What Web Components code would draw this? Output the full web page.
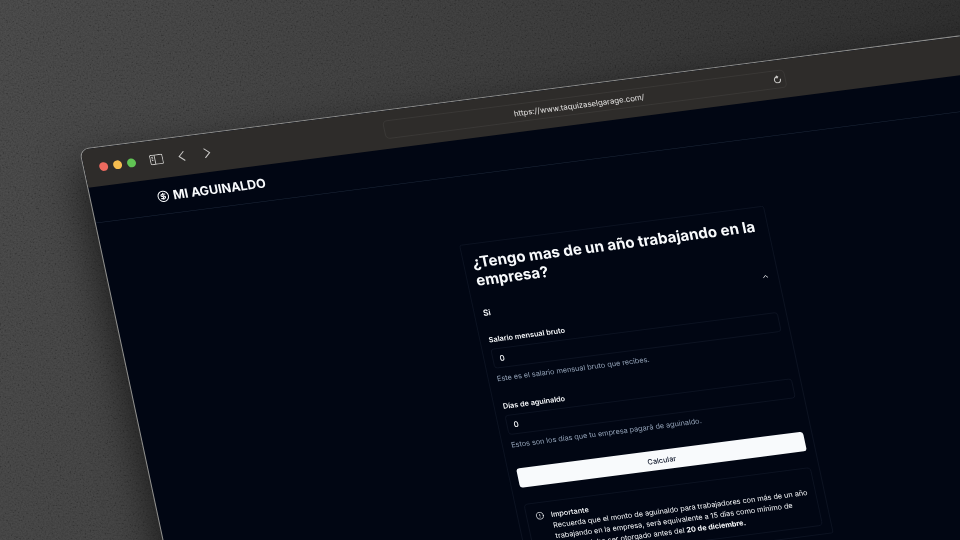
<!DOCTYPE html>
<html lang="es">
<head>
<meta charset="utf-8">
<title>Mi Aguinaldo</title>
<style>
  html, body { margin: 0; height: 100%; }
  body { overflow: hidden; background: #333; font-family: Inter, "Liberation Sans", sans-serif; }
</style>
</head>
<body>
<desk-scene>
  <browser-window url="https://www.taquizaselgarage.com/">
    <site-nav name="MI AGUINALDO"></site-nav>
    <bonus-card heading="¿Tengo mas de un año trabajando en la empresa?" answer="Si">
      <form-field label="Salario mensual bruto" hint="Este es el salario mensual bruto que recibes."></form-field>
      <form-field label="Días de aguinaldo" hint="Estos son los días que tu empresa pagará de aguinaldo."></form-field>
      <submit-button>Calcular</submit-button>
      <info-alert heading="Importante">Recuerda que el monto de aguinaldo para trabajadores con más de un año trabajando en la empresa, será equivalente a 15 días como mínimo de salario y debe ser otorgado antes del <b>20 de diciembre.</b></info-alert>
    </bonus-card>
  </browser-window>
</desk-scene>

<script>
class Base extends HTMLElement {
  connectedCallback() {
    if (this.shadowRoot) return;
    this.attachShadow({ mode: "open" }).innerHTML = this.view();
  }
}

customElements.define("desk-scene", class extends Base {
  view() { return `
    <style>
      :host { display: block; position: relative; height: 100vh; overflow: hidden; --line: #151d2d;
        background: linear-gradient(105deg, #444 0%, #393939 45%, #2b2b2b 90%); }
      .grain { position: absolute; inset: 0; width: 100%; height: 100%; opacity: .14; mix-blend-mode: overlay; }
      .stage { position: absolute; left: 79px; top: 149px; width: 203vw; transform-origin: 0 0;
        transform: rotate(-7.35deg) skewX(4.7deg) scale(.52); }
    </style>
    <svg class="grain" aria-hidden="true">
      <filter id="n"><feTurbulence type="fractalNoise" baseFrequency=".6" numOctaves="2" seed="4"/><feColorMatrix type="saturate" values="0"/><feComponentTransfer><feFuncR type="linear" slope="2.4" intercept="-.7"/><feFuncG type="linear" slope="2.4" intercept="-.7"/><feFuncB type="linear" slope="2.4" intercept="-.7"/><feFuncA type="linear" slope="0" intercept="1"/></feComponentTransfer></filter>
      <rect width="100%" height="100%" filter="url(#n)"/>
    </svg>
    <div class="stage"><slot></slot></div>`; }
});

customElements.define("browser-window", class extends Base {
  view() { return `
    <style>
      :host { display: block; box-sizing: border-box; min-height: 230vh; overflow: hidden; border: 2px solid #8e8e8c;
        border-radius: 18px; background: #010613; box-shadow: -10px 30px 80px rgba(0,0,0,.6); color: #f8fafc; }
      .bar { box-sizing: border-box; display: grid; grid-template-columns: 1fr 779px 1fr; align-items: center; height: 74px; padding-right: 4px; background: #2e2c2a; }
      .left, .dots { display: flex; align-items: center; }
      .left { padding-left: 29px; gap: 27px; }
      .dots { gap: 10px; }
      .dots i { width: 17px; height: 17px; border-radius: 50%; }
      button { all: unset; display: flex; color: #c9c8c6; }
      .addr { box-sizing: border-box; display: flex; align-items: center; height: 36px; padding-right: 6px; border: 2px solid #3a3836; border-radius: 9px; }
      input { all: unset; flex: 1; min-width: 0; text-align: center; font: 400 15px Inter, sans-serif; color: #e4e3e2; }
    </style>
    <div class="bar">
      <div class="left">
        <div class="dots"><i style="background:#ed6a5f"></i><i style="background:#f5bd4f"></i><i style="background:#61c454"></i></div>
        <button aria-label="Barra lateral"><svg width="26" height="20" viewBox="0 0 26 20" fill="none" stroke="currentColor" stroke-width="1.8"><rect x="1" y="1" width="24" height="18" rx="2"/><path d="M10 1v18M4 5h3M4 8h3M4 11h3"/></svg></button>
        <button aria-label="Atrás"><svg width="20" height="20" viewBox="0 0 20 20" fill="none" stroke="currentColor" stroke-width="2"><path d="M14 1L4 10l10 9"/></svg></button>
        <button aria-label="Adelante"><svg width="20" height="20" viewBox="0 0 20 20" fill="none" stroke="currentColor" stroke-width="2"><path d="M6 1l10 9-10 9"/></svg></button>
      </div>
      <div class="addr"><input aria-label="Dirección" value="${this.getAttribute("url")}">
        <button aria-label="Recargar"><svg width="16" height="16" viewBox="0 0 16 16" fill="none" stroke="currentColor" stroke-width="2"><path d="M13.500 7.500a5.800 5.800 0 1 1-5-4.300M6.500 .8L9.500 3.300 7 6"/></svg></button></div>
    </div>
    <slot></slot>`; }
});

customElements.define("site-nav", class extends Base {
  view() { return `
    <style>
      :host { display: flex; align-items: center; height: 69px; padding: 0 126px; border-bottom: 1px solid #1e293b; }
      a { display: flex; align-items: center; gap: 7px; color: inherit; text-decoration: none; font-size: 24px; font-weight: 700; line-height: 32px; }
    </style>
    <a href="#"><svg width="24" height="24" viewBox="0 0 24 24" fill="none" stroke="currentColor" stroke-width="2" stroke-linecap="round" stroke-linejoin="round"><circle cx="12" cy="12" r="10"/><path d="M16 8h-6a2 2 0 1 0 0 4h4a2 2 0 1 1 0 4H8M12 18V6"/></svg>${this.getAttribute("name")}</a>`; }
});

customElements.define("bonus-card", class extends Base {
  view() { return `
    <style>
      :host { box-sizing: border-box; display: block; width: 590px; margin: 131px auto 0; padding: 18px 16px 16px; border: 1px solid var(--line); border-radius: 4px; }
      h2 { margin: 0; font-size: 29px; font-weight: 700; line-height: 35px; }
      .row { all: unset; display: flex; justify-content: space-between; align-items: center; width: 100%; box-sizing: border-box; padding: 34px 0 33px; font-size: 16px; font-weight: 600; line-height: 24px; }
      form { display: flex; flex-direction: column; }
    </style>
    <h2>${this.getAttribute("heading")}</h2>
    <button class="row" aria-expanded="true">${this.getAttribute("answer")}<svg width="16" height="16" viewBox="0 0 24 24" fill="none" stroke="currentColor" stroke-width="2" stroke-linecap="round" stroke-linejoin="round"><path d="M18 15l-6-6-6 6"/></svg></button>
    <form><slot></slot></form>`; }
});

customElements.define("form-field", class extends Base {
  view() { return `
    <style>
      :host { display: grid; gap: 10px; margin-bottom: 36px; font-size: 14px; line-height: 20px; }
      label { font-weight: 600; line-height: 16px; }
      input { box-sizing: border-box; width: 100%; height: 38px; margin: 0; padding: 0 12px; border: 1px solid var(--line); border-radius: 6px; background: none; color: inherit; font: 500 15px Inter, sans-serif; outline: none; }
      p { margin: 0; color: #94a3b8; }
    </style>
    <label for="v">${this.getAttribute("label")}</label>
    <input id="v" value="0" inputmode="numeric">
    <p>${this.getAttribute("hint")}</p>`; }
});

customElements.define("submit-button", class extends Base {
  view() { return `
    <style>
      :host { display: block; }
      button { display: block; width: 100%; height: 38px; border: 0; border-radius: 6px; background: #f8fafc; color: #0f172a; font: 500 14px Inter, sans-serif; }
    </style>
    <button type="button"><slot></slot></button>`; }
});

customElements.define("info-alert", class extends Base {
  view() { return `
    <style>
      :host { display: flex; gap: 13px; margin-top: 32px; padding: 14px 8px 14px 17px; border: 1px solid var(--line); border-radius: 8px; font-size: 14px; line-height: 21px; }
      svg { flex: none; margin-top: 3px; }
      h5 { margin: 0; font-size: 14px; font-weight: 500; }
      ::slotted(b) { font-weight: 700; }
    </style>
    <svg width="16" height="16" viewBox="0 0 24 24" fill="none" stroke="currentColor" stroke-width="2" stroke-linecap="round"><circle cx="12" cy="12" r="10"/><path d="M12 8v4M12 16h.01"/></svg>
    <div><h5>${this.getAttribute("heading")}</h5><slot></slot></div>`; }
});
</script>
</body>
</html>
